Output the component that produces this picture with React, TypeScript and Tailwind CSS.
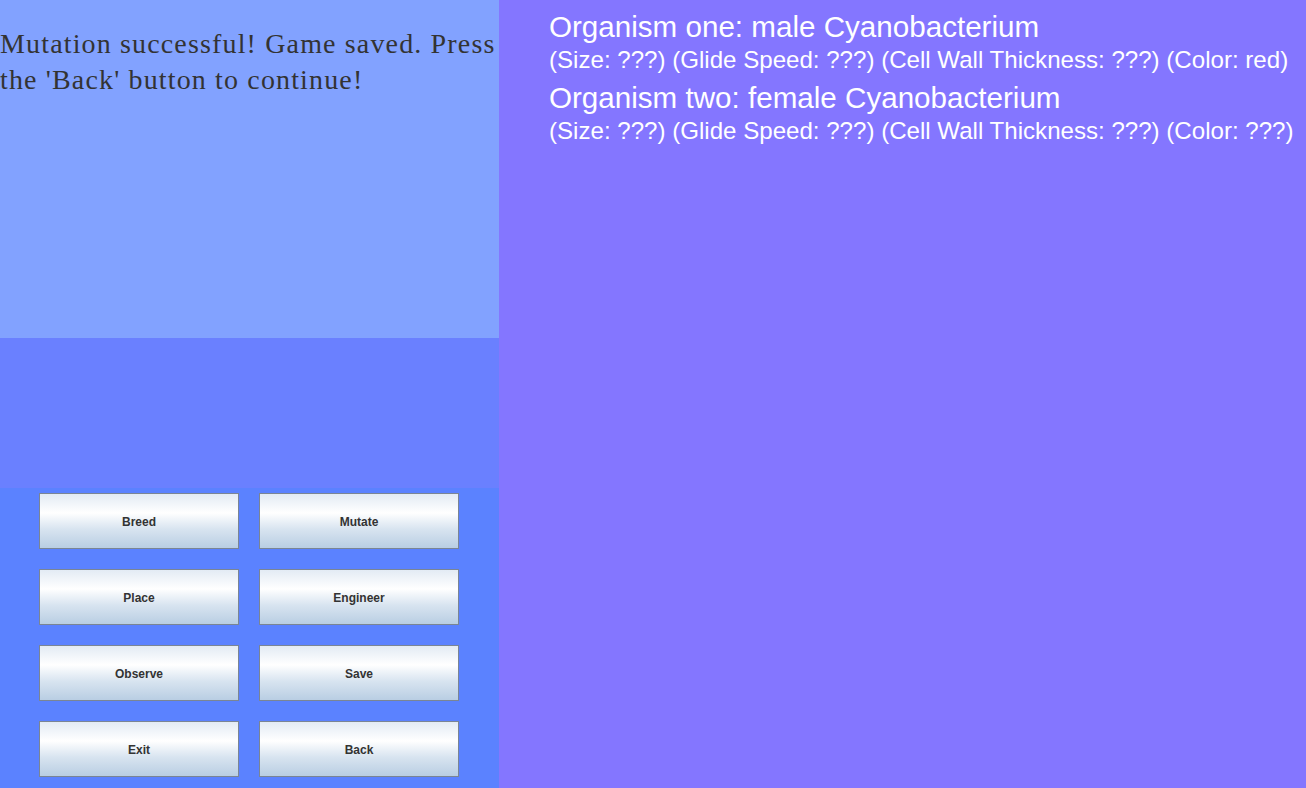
import React from "react";

const Btn = ({ label }: { label: string }) => (
  <button
    className="h-[56px] w-[200px] border border-[#7a8594] bg-[linear-gradient(to_bottom,#e3ebf4_0%,#ffffff_35%,#d8e4f0_65%,#b9cee3_100%)] pt-[2px] text-[12px] font-bold text-[#333333]"
    style={{ fontFamily: "'Liberation Sans', Arial, sans-serif" }}
  >
    {label}
  </button>
);

export default function App() {
  return (
    <div className="flex h-[788px] w-[1306px] overflow-hidden">
      <div className="flex w-[499px] flex-col">
        <div className="h-[338px] bg-[#82a2ff]">
          <p
            className="pt-[26px] text-[28px] leading-[36px] tracking-[1.15px] text-[#333333]"
            style={{ fontFamily: "'Liberation Serif', 'Times New Roman', serif" }}
          >
            Mutation successful! Game saved. Press the 'Back' button to continue!
          </p>
        </div>
        <div className="h-[150px] bg-[#6a80ff]" />
        <div className="grid flex-1 grid-cols-[200px_200px] content-start gap-x-[20px] gap-y-[20px] bg-[#5b82ff] pl-[39px] pt-[5px]">
          <Btn label="Breed" />
          <Btn label="Mutate" />
          <Btn label="Place" />
          <Btn label="Engineer" />
          <Btn label="Observe" />
          <Btn label="Save" />
          <Btn label="Exit" />
          <Btn label="Back" />
        </div>
      </div>
      <div
        className="flex-1 whitespace-nowrap bg-[#8476ff] pl-[50px] pt-[10px] text-white"
        style={{ fontFamily: "'Liberation Sans', Arial, sans-serif" }}
      >
        <div className="text-[29.6px] leading-[34px]">Organism one: male Cyanobacterium</div>
        <div className="text-[24.1px] leading-[32px]">(Size: ???) (Glide Speed: ???) (Cell Wall Thickness: ???) (Color: red)</div>
        <div className="mt-[5px] text-[29.6px] leading-[34px]">Organism two: female Cyanobacterium</div>
        <div className="text-[24.1px] leading-[32px]">(Size: ???) (Glide Speed: ???) (Cell Wall Thickness: ???) (Color: ???)</div>
      </div>
    </div>
  );
}
